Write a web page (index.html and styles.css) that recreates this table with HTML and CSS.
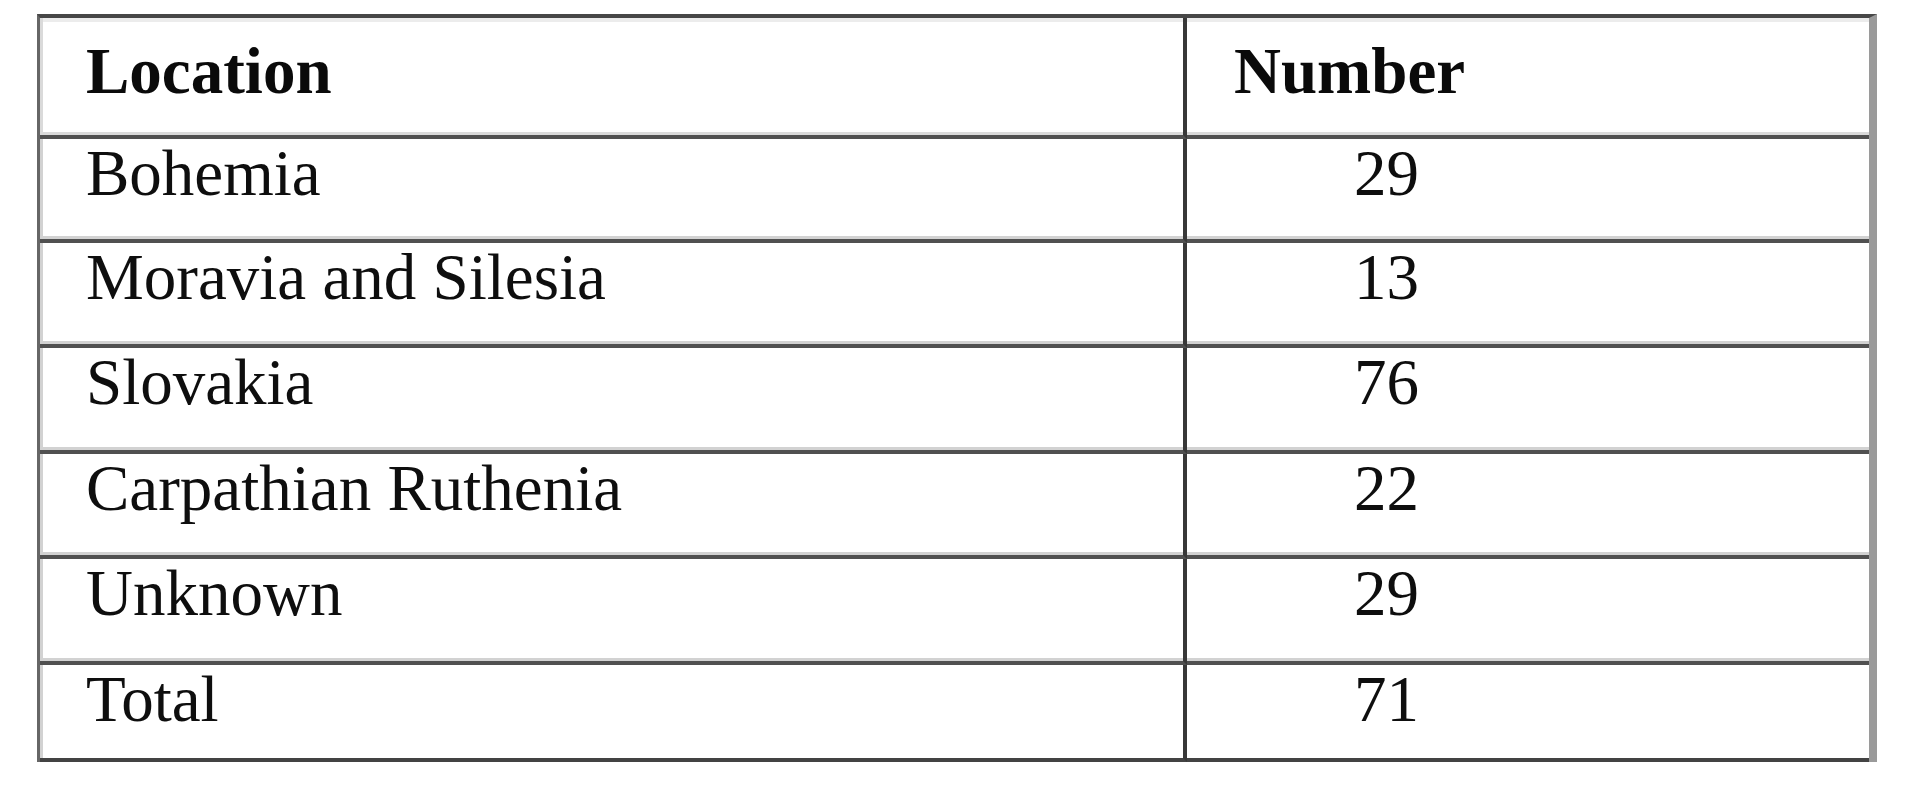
FILE: index.html
```html
<!DOCTYPE html>
<html lang="en">
<head>
<meta charset="utf-8">
<title>Location table</title>
<link rel="stylesheet" href="styles.css">
</head>
<body>
<table class="data">
  <colgroup>
    <col class="col-loc">
    <col class="col-num">
  </colgroup>
  <thead>
    <tr>
      <th class="loc">Location</th>
      <th class="num">Number</th>
    </tr>
  </thead>
  <tbody>
    <tr class="first"><td class="loc">Bohemia</td><td class="num">29</td></tr>
    <tr><td class="loc">Moravia and Silesia</td><td class="num">13</td></tr>
    <tr><td class="loc">Slovakia</td><td class="num">76</td></tr>
    <tr><td class="loc">Carpathian Ruthenia</td><td class="num">22</td></tr>
    <tr><td class="loc">Unknown</td><td class="num">29</td></tr>
    <tr class="last"><td class="loc">Total</td><td class="num">71</td></tr>
  </tbody>
</table>
</body>
</html>
```
FILE: styles.css
```css
html, body {
  margin: 0;
  padding: 0;
  background: #ffffff;
}

body {
  padding: 14px 0 0 37px;
  font-family: "Liberation Serif", "Times New Roman", serif;
  color: #0e0e0e;
}

.data {
  border-collapse: separate;
  border-spacing: 0;
  table-layout: fixed;
  width: 1840px;
  border-top: 4px solid #474747;
  border-left: 3px solid #666666;
  border-right: 8px solid #9a9a9a;
  font-size: 65px;
  line-height: 69px;
}

.col-loc {
  width: 1147px;
}

.data th,
.data td {
  text-align: left;
  vertical-align: top;
  border-bottom: 4px solid #505050;
  box-shadow: inset 0 -3px 0 #d2d2d2;
  padding: 0 0 32.5px 46px;
  white-space: nowrap;
}

.data th {
  font-weight: bold;
  color: #0a0a0a;
  padding-top: 18.5px;
  padding-bottom: 29.5px;
  box-shadow: inset 0 -3px 0 #dadada, inset 0 4px 0 #ececec;
}

.data .loc {
  border-right: 4px solid #383838;
}

.data td.loc {
  box-shadow: inset 3px -3px 0 #d2d2d2;
}

.data th.loc {
  box-shadow: inset 3px -3px 0 #dadada, inset 0 4px 0 #ececec;
}

.data td.num {
  padding-left: 167px;
}

.data th.num {
  padding-left: 47px;
}

.data tr.first td {
  padding-bottom: 30.5px;
}

.data tr.last td {
  padding-bottom: 24px;
  border-bottom-color: #434343;
  box-shadow: none;
}

.data tr.last td.loc {
  box-shadow: inset 3px 0 0 #d2d2d2;
}
```
